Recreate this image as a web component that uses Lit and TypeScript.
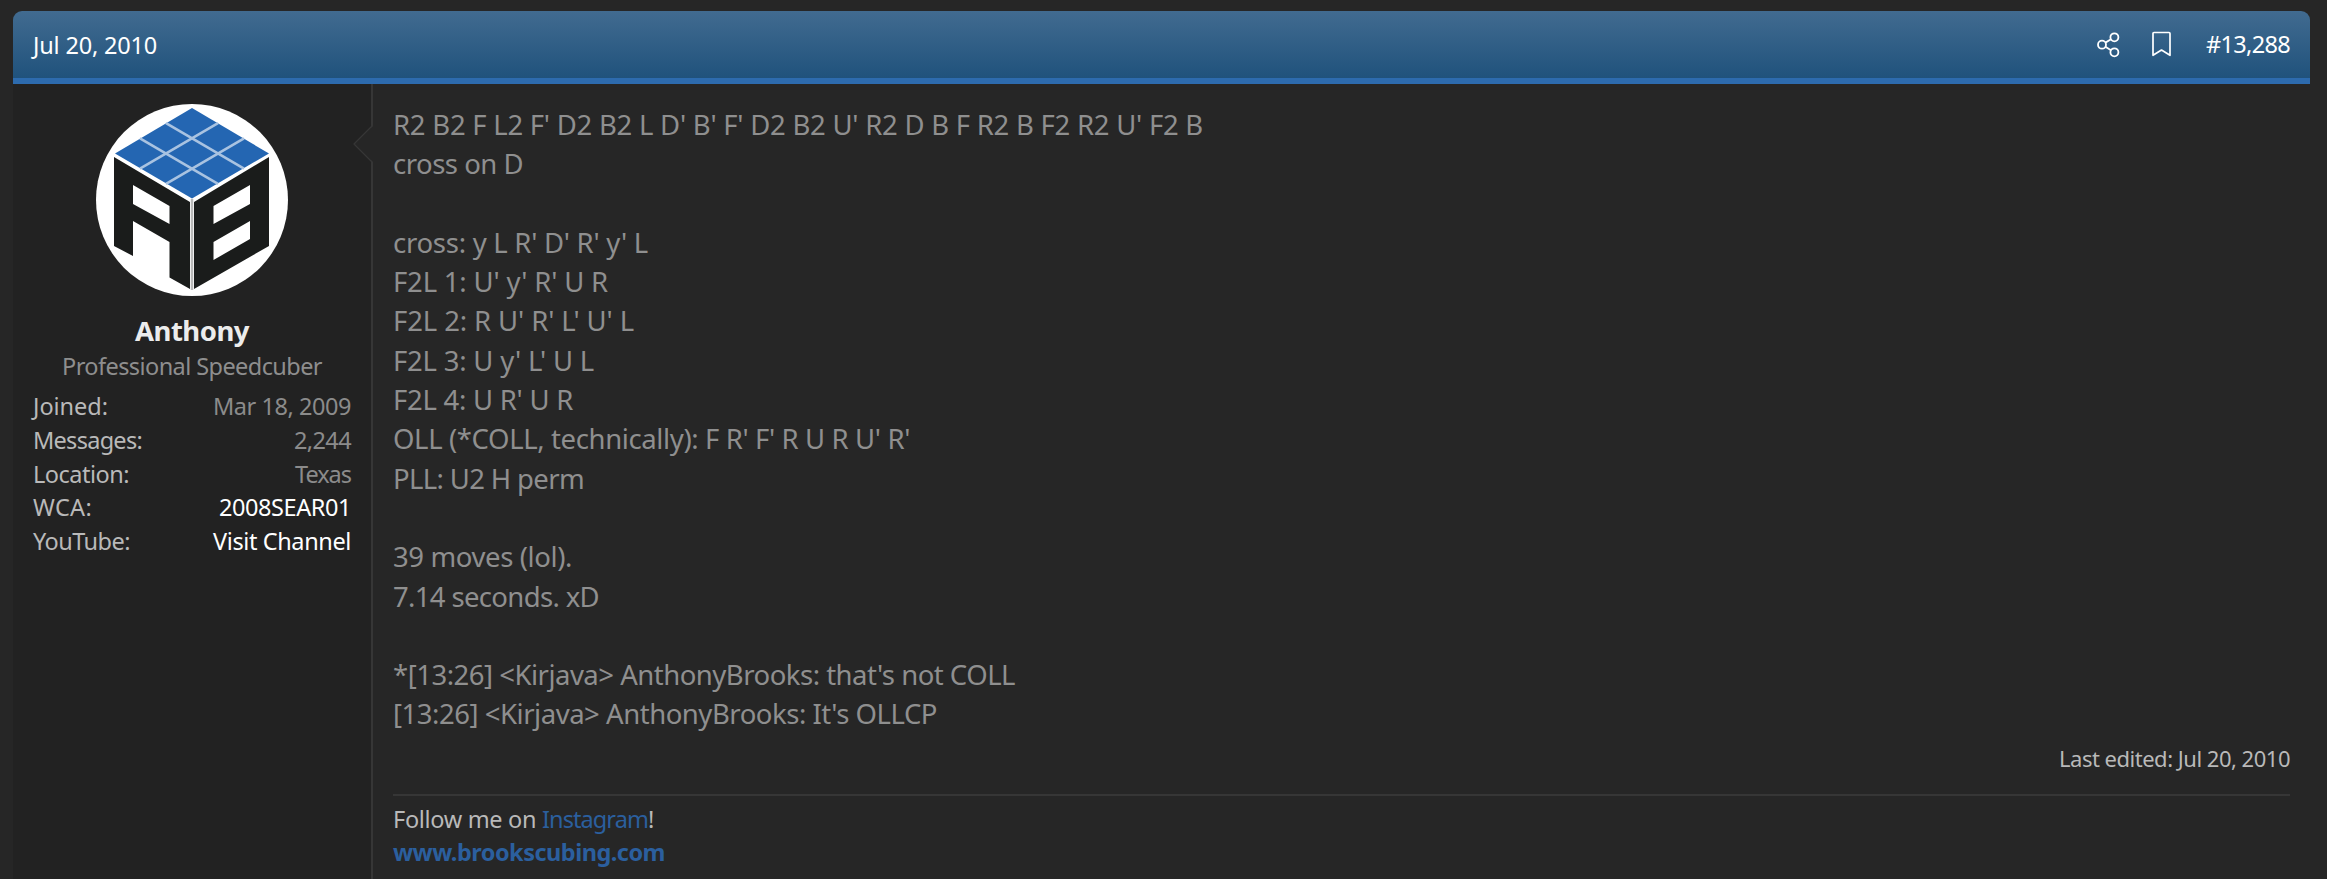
import { LitElement, html, css, svg } from "lit";
import { customElement } from "lit/decorators.js";

interface Line { text: string; width: number }

const LINES: Line[] = [
  { text: "R2 B2 F L2 F' D2 B2 L D' B' F' D2 B2 U' R2 D B F R2 B F2 R2 U' F2 B", width: 810 },
  { text: "cross on D", width: 130 },
  { text: "", width: 0 },
  { text: "cross: y L R' D' R' y' L", width: 255 },
  { text: "F2L 1: U' y' R' U R", width: 215 },
  { text: "F2L 2: R U' R' L' U' L", width: 241 },
  { text: "F2L 3: U y' L' U L", width: 201 },
  { text: "F2L 4: U R' U R", width: 180 },
  { text: "OLL (*COLL, technically): F R' F' R U R U' R'", width: 517 },
  { text: "PLL: U2 H perm", width: 191 },
  { text: "", width: 0 },
  { text: "39 moves (lol).", width: 179 },
  { text: "7.14 seconds. xD", width: 206 },
  { text: "", width: 0 },
  { text: "*[13:26] <Kirjava> AnthonyBrooks: that's not COLL", width: 622 },
  { text: "[13:26] <Kirjava> AnthonyBrooks: It's OLLCP", width: 544 },
];

/** Text set to a given measure by even tracking. */
@customElement("fit-text")
class FitText extends LitElement {
  static properties = { text: {}, measure: { type: Number } };
  declare text: string;
  declare measure: number;
  static styles = css`
    :host { display: inline-block; white-space: pre; }
  `;
  render() { return html`<span>${this.text}</span>`; }
  async updated() {
    await document.fonts.ready;
    const span = this.renderRoot.querySelector("span")!;
    span.style.letterSpacing = "0px";
    const natural = span.getBoundingClientRect().width;
    if (natural && this.measure) {
      span.style.letterSpacing = `${(this.measure - natural) / this.text.length}px`;
    }
  }
}

const fit = (text: string, width: number) =>
  html`<fit-text .text=${text} .measure=${width}></fit-text>`;

const grid = [1, 2].map((i) => {
  const t = i / 3;
  return svg`
    <path d="M${96 - 78 * t} ${4 + 45.5 * t}L${174 - 78 * t} ${49.5 + 45.5 * t}"/>
    <path d="M${96 + 78 * t} ${4 + 45.5 * t}L${18 + 78 * t} ${49.5 + 45.5 * t}"/>`;
});

@customElement("app-root")
class AppRoot extends LitElement {
  static styles = css`
    :host {
      display: block; box-sizing: border-box; width: 2328px; height: 880px;
      padding: 11px 17px 0 13px; overflow: hidden; background: #262626;
      border: solid #fff; border-width: 0 1px 1px 0;
      font: 23.5px/33.6px "Noto Sans", "Open Sans", sans-serif; color: #b9b9b9;
    }
    .bar {
      box-sizing: border-box; height: 73px; display: flex; align-items: center;
      padding: 0 20px; border-bottom: 6px solid #2d6bae; border-radius: 9px 9px 0 0;
      background: linear-gradient(#416b90, #20527c); color: #fff;
    }
    .date { padding-top: 2px; }
    .tools { margin-left: auto; display: flex; align-items: center; }
    .tools svg { display: block; }
    .share { margin-right: 30px; }
    .mark { margin-right: 34px; }
    .main { display: flex; height: 795px; }
    .user {
      box-sizing: border-box; width: 360px; flex: none; padding: 20px 20px 0;
      border-right: 2px solid #363636; background: #222; position: relative;
    }
    .notch { position: absolute; left: 340px; top: 41px; }
    .avatar { display: block; margin: 0 auto; }
    .name { margin-top: 18px; text-align: center; font-size: 27.5px; font-weight: 700; line-height: 34px; color: #ececec; }
    .title { margin-top: 1px; text-align: center; color: #8e8e8e; line-height: 35px; }
    .facts { display: grid; grid-template-rows: 34px 34px 33px 34px 34px; margin-top: 6px; }
    .fact { display: flex; justify-content: space-between; }
    .value { color: #8b8b8b; }
    .link { color: #fff; }
    .post { flex: 1; padding: 21px 20px 0; }
    .line { height: 39.3px; line-height: 39.3px; font-size: 27.5px; color: #8f8f8f; }
    .edited { text-align: right; font-size: 22px; line-height: 30px; margin-top: 9px; }
    .sign { margin-top: 21px; border-top: 2px solid #363636; padding-top: 7px; }
    .blue { color: #2b5f9e; }
    .bold { font-weight: 700; }
  `;

  fact(label: string, lw: number, value: string, vw: number, cls: string) {
    return html`<div class="fact"><span>${fit(label, lw)}</span><span class=${cls}>${fit(value, vw)}</span></div>`;
  }

  render() {
    return html`
      <div class="bar">
        <span class="date">${fit("Jul 20, 2010", 124)}</span>
        <div class="tools">
          <svg class="share" width="26" height="28" viewBox="0 0 26 28" fill="none" stroke="#fff" stroke-width="1.8">
            <circle cx="6" cy="13.7" r="4"/><circle cx="18.4" cy="6.3" r="4"/><circle cx="18.4" cy="21.3" r="4"/>
            <path d="M9.4 11.6l5.6-3.300M9.400 15.800l5.600 3.400"/>
          </svg>
          <svg class="mark" width="20" height="28" viewBox="0 0 20 28" fill="none" stroke="#fff" stroke-width="1.7" stroke-linejoin="round">
            <path d="M1 2.500q0-1 1-1H17q1 0 1 1V24.300l-8.500-5.300L1 24.300z"/>
          </svg>
          ${fit("#13,288", 84)}
        </div>
      </div>
      <div class="main">
        <div class="user">
          <svg class="avatar" width="192" height="192" viewBox="0 0 192 192">
            <circle cx="96" cy="96" r="96" fill="#fff"/>
            <path d="M96 4L173 49.5L96 94.5L19 49.5z" fill="#2466b2"/>
            <g stroke="#a9c3e1" stroke-width="2.6">${grid}</g>
            <path fill="#1a1c1b" fill-rule="evenodd" d="M18 53L94 98V185L73.500 173.500V138L37 117V152L18 142zM37 81V100L73.500 120V102z"/>
            <path fill="#1a1c1b" fill-rule="evenodd" d="M98 98L173 53V142L98 185zM117.500 102V120L154 100V81zM117.500 138V156L154 135V117z"/>
            <path d="M96 95V186" stroke="#b9b9b9" stroke-width="2.500"/>
          </svg>
          <div class="name">${fit("Anthony", 114)}</div>
          <div class="title">${fit("Professional Speedcuber", 260)}</div>
          <div class="facts">
            ${this.fact("Joined:", 75, "Mar 18, 2009", 138, "value")}
            ${this.fact("Messages:", 109, "2,244", 57, "value")}
            ${this.fact("Location:", 96, "Texas", 56, "value")}
            ${this.fact("WCA:", 59, "2008SEAR01", 132, "link")}
            ${this.fact("YouTube:", 97, "Visit Channel", 138, "link")}
          </div>
          <svg class="notch" width="21" height="38" viewBox="0 0 21 38">
            <path d="M20 0V1L1 19L20 37V38H21V0z" fill="#262626"/>
            <path d="M19.500 .5L1 19L19.500 37.500" fill="none" stroke="#363636" stroke-width="1.300"/>
          </svg>
        </div>
        <div class="post">
          ${LINES.map((l) => html`<div class="line">${l.text ? fit(l.text, l.width) : ""}</div>`)}
          <div class="edited">${fit("Last edited: Jul 20, 2010", 231)}</div>
          <div class="sign">
            <div>${fit("Follow me on ", 149)}<span class="blue">${fit("Instagram", 106)}</span>${fit("!", 7)}</div>
            <div class="blue bold">${fit("www.brookscubing.com", 272)}</div>
          </div>
        </div>
      </div>`;
  }
}
